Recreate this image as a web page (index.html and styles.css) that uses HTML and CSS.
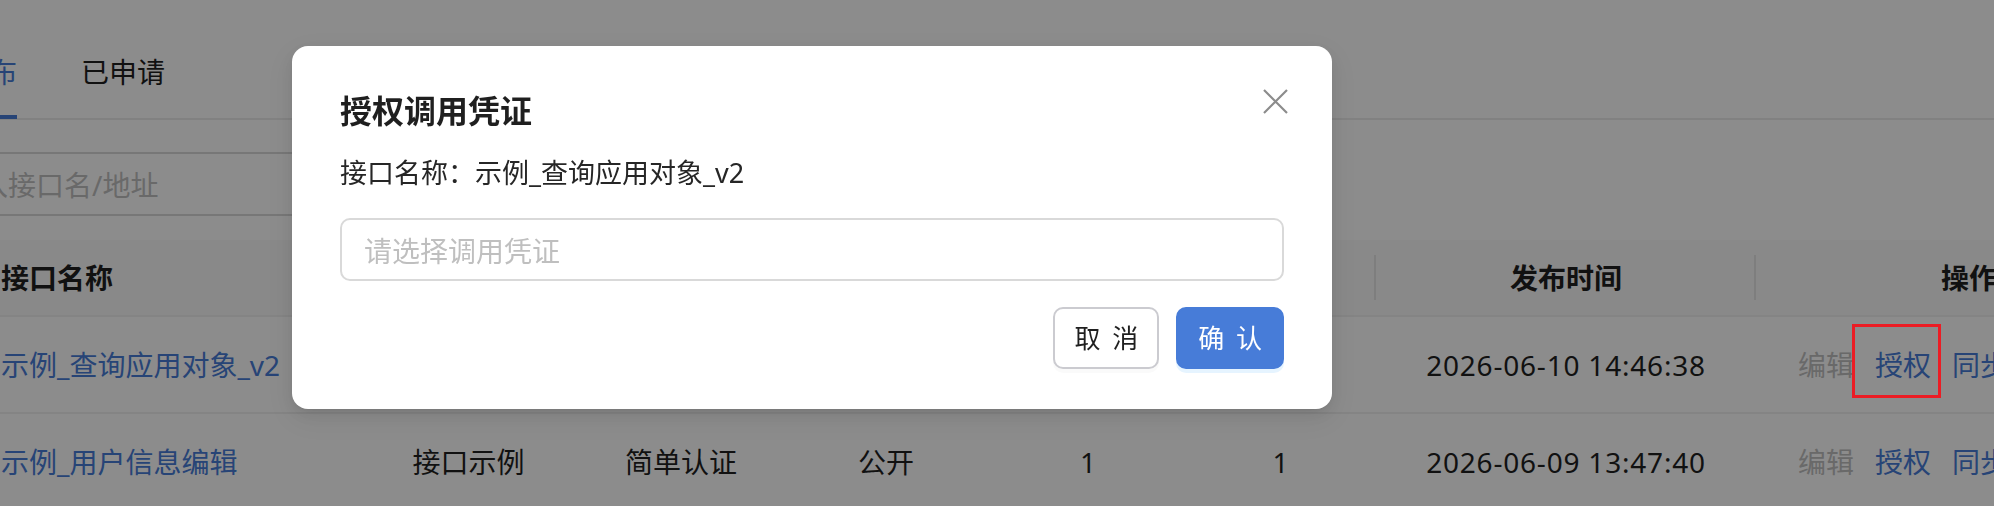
FILE: index.html
```html
<!DOCTYPE html>
<html lang="zh-CN">
<head>
<meta charset="utf-8">
<title>接口管理</title>
<link rel="stylesheet" href="styles.css">
</head>
<body>
<div class="page">
  <div class="tabs">
    <div class="tab active">已发布</div>
    <div class="tab">已申请</div>
  </div>
  <div class="toolbar">
    <div class="search"><span class="search-placeholder">请输入接口名/地址</span></div>
  </div>
  <table class="grid">
    <colgroup>
      <col class="c-name"><col class="c-group"><col class="c-auth"><col class="c-open"><col class="c-ver"><col class="c-cnt"><col class="c-time"><col class="c-ops">
    </colgroup>
    <thead>
      <tr>
        <th class="left">接口名称</th>
        <th>所属分组</th>
        <th>认证方式</th>
        <th>可见性</th>
        <th>版本</th>
        <th>授权数</th>
        <th>发布时间</th>
        <th class="last">操作</th>
      </tr>
    </thead>
    <tbody>
      <tr>
        <td class="left"><span class="link">示例_查询应用对象_v2</span></td>
        <td>接口示例</td>
        <td>简单认证</td>
        <td>公开</td>
        <td>1</td>
        <td>1</td>
        <td class="time">2026-06-10 14:46:38</td>
        <td class="ops"><span class="op disabled">编辑</span><span class="op marked">授权</span><span class="op">同步</span><span class="op">删除</span></td>
      </tr>
      <tr>
        <td class="left"><span class="link">示例_用户信息编辑</span></td>
        <td>接口示例</td>
        <td>简单认证</td>
        <td>公开</td>
        <td>1</td>
        <td>1</td>
        <td class="time">2026-06-09 13:47:40</td>
        <td class="ops"><span class="op disabled">编辑</span><span class="op">授权</span><span class="op">同步</span><span class="op">删除</span></td>
      </tr>
    </tbody>
  </table>
</div>

<div class="mask"></div>
<div class="modal-wrap">
  <div class="modal">
    <div class="modal-header">
      <div class="modal-title">授权调用凭证</div>
      <button class="close" aria-label="关闭">
        <svg width="25" height="25" viewBox="0 0 25 25"><path d="M1 1 L24 24 M24 1 L1 24" stroke="#8c8c8c" stroke-width="2.2" fill="none"/></svg>
      </button>
    </div>
    <div class="api-name">接口名称：示例_查询应用对象_v2</div>
    <div class="select"><span class="select-placeholder">请选择调用凭证</span></div>
    <div class="modal-footer">
      <button class="btn">取 消</button>
      <button class="btn primary">确 认</button>
    </div>
  </div>
</div>
</body>
</html>
```

FILE: styles.css
```css
* { box-sizing: border-box; }

html, body {
  margin: 0;
  padding: 0;
}

body {
  width: 1994px;
  height: 506px;
  overflow: hidden;
  background: #ffffff;
  font-family: "Noto Sans", "Noto Sans CJK SC", sans-serif;
  color: #1f1f1f;
}

/* ---------- page behind the mask ---------- */
.page {
  width: 2400px;
  margin-left: -100px;
  padding-top: 28px;
}

.tabs {
  display: flex;
  gap: 64px;
  padding-left: 33px;
  border-bottom: 2px solid #ececec;
}

.tab {
  font-size: 28px;
  line-height: 40px;
  padding: 24px 0 23px;
  border-bottom: 4px solid transparent;
  margin-bottom: -1px;
  color: #1f1f1f;
}

.tab.active {
  color: #477cd8;
  border-bottom-color: #477cd8;
}

.toolbar {
  margin-top: 32px;
  padding-left: 10px;
}

.search {
  width: 720px;
  height: 64px;
  border: 2px solid #d9d9d9;
  border-radius: 10px;
  padding: 0 12px;
  display: flex;
  align-items: center;
}

.search-placeholder {
  font-size: 28px;
  color: #bfbfbf;
}

.grid {
  margin-top: 24px;
  margin-left: 85px;
  border-collapse: collapse;
  table-layout: fixed;
  width: 2197px;
  font-size: 28px;
}

.c-name { width: 371px; }
.c-group { width: 225px; }
.c-auth { width: 200px; }
.c-open { width: 210px; }
.c-ver { width: 194px; }
.c-cnt { width: 191px; }
.c-time { width: 380px; }
.c-ops { width: 426px; }

.grid th {
  font-weight: 600;
  line-height: 40px;
  padding: 17.5px 16px;
  text-align: center;
  white-space: nowrap;
  color: #1f1f1f;
  border-bottom: 2px solid #f0f0f0;
  background: linear-gradient(#e6e6e6, #e6e6e6) right center / 2px 45px no-repeat, #fafafa;
}

.grid th.last {
  background: #fafafa;
}

.grid td {
  line-height: 40px;
  padding: 27.5px 16px;
  text-align: center;
  white-space: nowrap;
  color: #1f1f1f;
  border-bottom: 2px solid #f0f0f0;
}

.grid .left { text-align: left; }

.link { color: #477cd8; }

.grid td.time { letter-spacing: 0.8px; }

.grid td.ops {
  text-align: left;
  padding-left: 42px;
}

.op {
  display: inline-block;
  color: #477cd8;
  margin-right: 21px;
}

.op.disabled { color: #bfbfbf; }

.op.marked { position: relative; }

.op.marked::after {
  content: "";
  position: absolute;
  left: -23px;
  right: -10px;
  top: -21px;
  bottom: -13px;
  border: 3px solid #ec1c24;
  z-index: 1002;
}

/* ---------- mask + modal ---------- */
.mask {
  position: fixed;
  inset: 0;
  background: rgba(0, 0, 0, 0.45);
  z-index: 1000;
}

.modal-wrap {
  position: fixed;
  inset: 0;
  z-index: 1001;
  padding: 46px 0 0 292px;
}

.modal {
  width: 1040px;
  background: #ffffff;
  border-radius: 16px;
  padding: 44px 48px 40px 48px;
  box-shadow: 0 6px 16px 0 rgba(0, 0, 0, 0.08), 0 3px 6px -4px rgba(0, 0, 0, 0.12), 0 9px 28px 8px rgba(0, 0, 0, 0.05);
}

.modal-header {
  display: flex;
  justify-content: space-between;
  align-items: flex-start;
}

.modal-title {
  font-size: 32px;
  line-height: 42px;
  font-weight: 600;
  color: #1f1f1f;
}

.close {
  display: block;
  width: 25px;
  height: 25px;
  margin: -1px -4px 0 0;
  padding: 0;
  border: 0;
  background: none;
}

.close svg { display: block; }

.api-name {
  margin-top: 23px;
  font-size: 27px;
  line-height: 36px;
  color: #262626;
}

.select {
  margin-top: 27px;
  height: 63px;
  border: 2px solid #d9d9d9;
  border-radius: 10px;
  padding: 0 22px;
  display: flex;
  align-items: center;
}

.select-placeholder {
  font-size: 28px;
  color: #bfbfbf;
}

.modal-footer {
  margin-top: 26px;
  display: flex;
  justify-content: flex-end;
  gap: 17px;
}

.btn {
  height: 62px;
  padding: 0 19px;
  border: 2px solid #cbcbd0;
  border-radius: 10px;
  background: #ffffff;
  font-family: "Noto Sans", "Noto Sans CJK SC", sans-serif;
  font-size: 26px;
  line-height: 1;
  word-spacing: 5px;
  color: #1f1f1f;
  box-shadow: 0 4px 0 rgba(0, 0, 0, 0.02);
}

.btn.primary {
  padding: 0 20px;
  background: #477cd8;
  border-color: #477cd8;
  color: #ffffff;
  box-shadow: 0 4px 0 rgba(5, 145, 255, 0.1);
}
```
